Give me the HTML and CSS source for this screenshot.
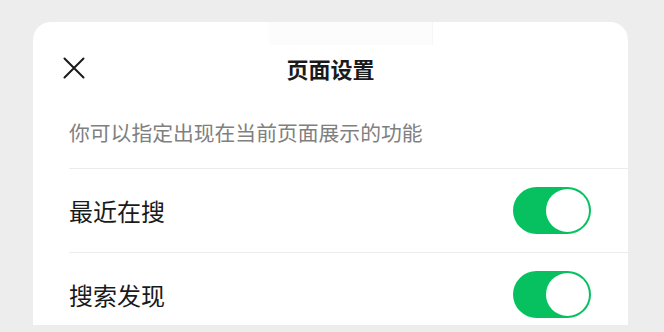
FILE: index.html
```html
<!DOCTYPE html>
<html lang="zh-CN">
<head>
<meta charset="utf-8">
<title>页面设置</title>
<link rel="stylesheet" href="styles.css">
</head>
<body>
<div class="page">
  <div class="sheet">
    <div class="header">
      <div class="close">
        <svg width="22" height="22" viewBox="0 0 22 22" aria-hidden="true">
          <path d="M1.5 1.5 L20.5 20.5 M20.5 1.5 L1.5 20.5" stroke="#1a1a1a" stroke-width="2" stroke-linecap="round" fill="none"/>
        </svg>
      </div>
      <div class="title">页面设置</div>
      <div class="spacer"></div>
    </div>
    <div class="hint">你可以指定出现在当前页面展示的功能</div>
    <div class="list">
      <div class="row">
        <span class="label">最近在搜</span>
        <span class="switch"><span class="knob"></span></span>
      </div>
      <div class="row">
        <span class="label">搜索发现</span>
        <span class="switch"><span class="knob"></span></span>
      </div>
    </div>
  </div>
</div>
</body>
</html>
```

FILE: styles.css
```css
html, body {
  margin: 0;
  padding: 0;
}
body {
  background: #ededed;
  font-family: "Noto Sans CJK SC", "Noto Sans", sans-serif;
  width: 664px;
  height: 332px;
  overflow: hidden;
}
.page {
  padding: 22px 36px 0 33px;
}
.sheet {
  position: relative;
  background: #ffffff;
  width: 595px;
  height: 303px;
  border-radius: 18px 18px 0 0;
  overflow: hidden;
}
.sheet::before {
  content: "";
  position: absolute;
  left: 236px;
  top: 0;
  width: 163px;
  height: 23px;
  background: #fcfcfc;
  border-right: 1px solid #f6f6f6;
}
.header {
  position: relative;
  height: 92px;
  padding: 0 30px 4px;
  display: grid;
  grid-template-columns: 1fr auto 1fr;
  align-items: center;
}
.close {
  display: flex;
  align-items: center;
  width: 22px;
  height: 22px;
}
.close svg {
  display: block;
}
.title {
  font-size: 22px;
  font-weight: 700;
  color: #1a1a1a;
  line-height: 30px;
}
.hint {
  padding: 0 0 22px 36px;
  font-size: 20.8px;
  line-height: 28px;
  color: #808080;
}
.list {
  padding-left: 36px;
}
.row {
  height: 83px;
  border-top: 1px solid #ececec;
  display: flex;
  align-items: center;
  justify-content: space-between;
  padding-right: 37px;
}
.label {
  font-size: 24px;
  color: #1a1a1a;
  line-height: 32px;
}
.switch {
  width: 78px;
  height: 47px;
  border-radius: 24px;
  background: #07c160;
  display: flex;
  align-items: center;
  justify-content: flex-end;
  padding-right: 2px;
  box-sizing: border-box;
}
.knob {
  width: 43px;
  height: 43px;
  border-radius: 50%;
  background: #ffffff;
}
```
